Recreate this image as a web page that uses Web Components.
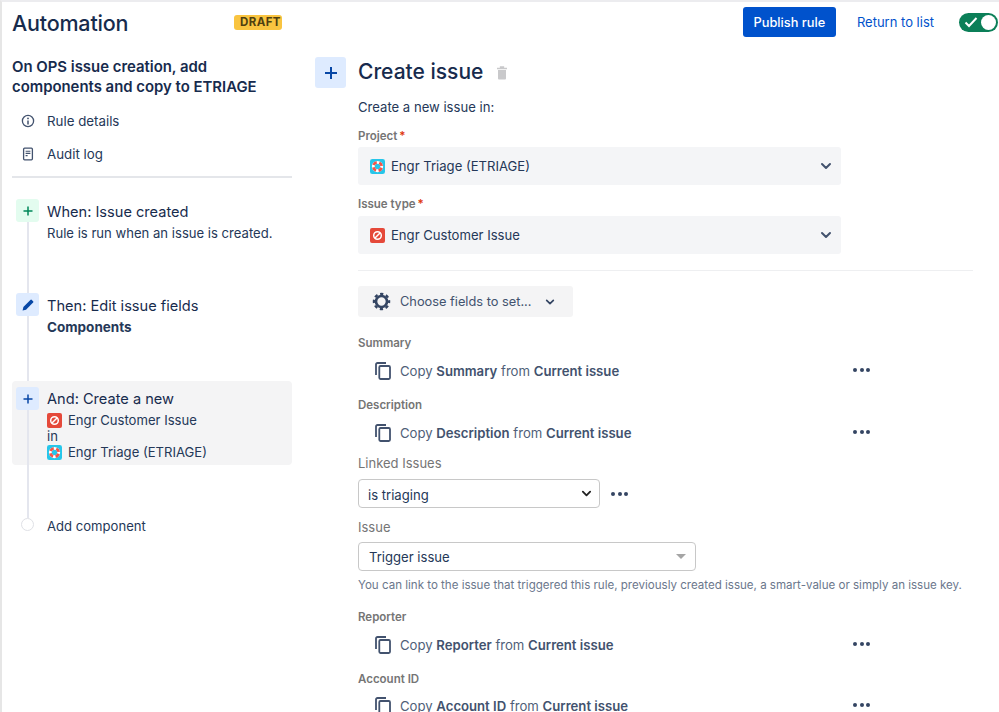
<!DOCTYPE html>
<html>
<head>
<meta charset="utf-8">
<title>Automation</title>
<style>
    html, body { margin: 0; height: 712px; overflow: hidden; background: #fff; }
    body { font-family: Inter, "Liberation Sans", sans-serif; color: #172b4d; }
</style>
</head>
<body>

<auto-page>
    <auto-topbar slot="top"></auto-topbar>

    <rule-sidebar slot="side">
        <span slot="title">On OPS issue creation, add components and copy to ETRIAGE</span>
        <side-link icon="info">Rule details</side-link>
        <side-link icon="log">Audit log</side-link>
        <rule-step slot="steps" tone="green" icon="plus" height="94" heading="When: Issue created">Rule is run when an issue is created.</rule-step>
        <rule-step slot="steps" tone="blue" icon="pencil" height="88" heading="Then: Edit issue fields"><b>Components</b></rule-step>
        <rule-step slot="steps" tone="blue" icon="plus" height="84" heading="And: Create a new" active>
            <type-line><issue-icon kind="bug"></issue-icon>Engr Customer Issue</type-line>
            <type-line>in</type-line>
            <type-line><issue-icon kind="ring"></issue-icon>Engr Triage (ETRIAGE)</type-line>
        </rule-step>
        <rule-add slot="steps">Add component</rule-add>
    </rule-sidebar>

    <issue-panel slot="main">
        <form-label style="margin-top:10px" plain big>Create a new issue in:</form-label>

        <form-label style="margin-top:10px" required>Project</form-label>
        <pick-field style="margin-top:4px"><issue-icon kind="ring"></issue-icon>Engr Triage (ETRIAGE)</pick-field>

        <form-label style="margin-top:10px" required>Issue type</form-label>
        <pick-field style="margin-top:5px"><issue-icon kind="bug"></issue-icon>Engr Customer Issue</pick-field>

        <hr-line style="margin-top:16px"></hr-line>

        <choose-button style="margin-top:15px">Choose fields to set...</choose-button>

        <form-label style="margin-top:17px">Summary</form-label>
        <copy-row style="margin-top:6px">Copy <b>Summary</b> from <b>Current issue</b></copy-row>

        <form-label style="margin-top:10px">Description</form-label>
        <copy-row style="margin-top:6px">Copy <b>Description</b> from <b>Current issue</b></copy-row>

        <form-label style="margin-top:7px" plain>Linked Issues</form-label>
        <link-select style="margin-top:8px" width="242" more>is triaging</link-select>

        <form-label style="margin-top:11px" plain>Issue</form-label>
        <link-select style="margin-top:7px" width="338" caret>Trigger issue</link-select>

        <hint-text style="margin-top:6px">You can link to the issue that triggered this rule, previously created issue, a smart-value or simply an issue key.</hint-text>

        <form-label style="margin-top:15px">Reporter</form-label>
        <copy-row style="margin-top:6px">Copy <b>Reporter</b> from <b>Current issue</b></copy-row>

        <form-label style="margin-top:10px">Account ID</form-label>
        <copy-row style="margin-top:5px">Copy <b>Account ID</b> from <b>Current issue</b></copy-row>
    </issue-panel>
</auto-page>

<script>
// shared icons
const ICONS = {
    plus: `<svg viewBox="0 0 12 12" width="12" height="12"><path d="M6 1.5v9M1.5 6h9" stroke="currentColor" stroke-width="1.5" fill="none"/></svg>`,
    pencil: `<svg viewBox="0 0 14 14" width="14" height="14"><path d="M9.4 1.9a1 1 0 0 1 1.4 0l1.3 1.3a1 1 0 0 1 0 1.4L5 11.7l-3.4.8.8-3.5z" fill="currentColor"/></svg>`,
    info: `<svg viewBox="0 0 14 14" width="14" height="14"><circle cx="7" cy="7" r="5.6" fill="none" stroke="currentColor" stroke-width="1.3"/><circle cx="7" cy="4.4" r=".9" fill="currentColor"/><path d="M7 6.4v4" stroke="currentColor" stroke-width="1.5"/></svg>`,
    log: `<svg viewBox="0 0 12 14" width="12" height="14"><rect x="1.6" y="1.2" width="8.8" height="11.6" rx="1" fill="none" stroke="currentColor" stroke-width="1.3"/><path d="M3.6 4.2h4.8M3.6 6.4h4.8M3.6 8.6h2" stroke="currentColor" stroke-width="1.1"/></svg>`,
    chevron: `<svg viewBox="0 0 12 12" width="12" height="12"><path d="M2 4l4 4 4-4" fill="none" stroke="currentColor" stroke-width="2" stroke-linecap="round" stroke-linejoin="round"/></svg>`,
    copy: `<svg viewBox="0 0 16 18" width="16" height="18"><path d="M1 13V2.500A1.500 1.500 0 0 1 2.500 1H11" fill="none" stroke="currentColor" stroke-width="1.800"/><rect x="4.300" y="4" width="10.700" height="13" rx="1.200" fill="none" stroke="currentColor" stroke-width="1.800"/></svg>`,
    gear: `<svg viewBox="0 0 20 20" width="19" height="19"><circle cx="10" cy="10" r="5.800" fill="none" stroke="currentColor" stroke-width="2.800"/><circle cx="10" cy="10" r="8" fill="none" stroke="currentColor" stroke-width="2.400" stroke-dasharray="3.400 2.880" stroke-dashoffset="1.700"/></svg>`,
    trash: `<svg viewBox="0 0 12 14" width="12" height="14"><path d="M1 2.500h10M4.500 2V1h3v1" stroke="currentColor" stroke-width="1.300" fill="none"/><path d="M2 4h8v8.500a1 1 0 0 1-1 1H3a1 1 0 0 1-1-1z" fill="currentColor"/></svg>`,
    check: `<svg viewBox="0 0 14 12" width="14" height="12"><path d="M1.500 6.500l3.500 3.500 7.500-8" fill="none" stroke="#fff" stroke-width="2"/></svg>`
};

// small helper, every element here is just a style + markup in an open root
function defineElement(tag, markup) {
    class El extends HTMLElement {
        constructor() {
            super();
            this.attachShadow({ mode: "open" });
            this.shadowRoot.innerHTML = typeof markup === "function" ? markup(this) : markup;
        }
    }
    customElements.define(tag, El);
}

defineElement("auto-page", `
    <style>
        :host { display: block; height: 712px; box-sizing: border-box; border-top: 2px solid #ececef; border-left: 2px solid #e6e6e6; overflow: hidden; }
        .body { display: flex; padding-left: 10px; }
        ::slotted([slot=side]) { flex: 0 0 280px; }
        ::slotted([slot=main]) { flex: 0 0 658px; margin-left: 23px; }
    </style>
    <slot name="top"></slot>
    <div class="body"><slot name="side"></slot><slot name="main"></slot></div>
`);

defineElement("auto-topbar", `
    <style>
        :host { display: flex; align-items: center; height: 40px; margin-bottom: 15px; padding: 0 1px 0 10px; }
        h1 { margin: 1px 0 0; width: 222px; font: 500 21.500px/30px Inter, sans-serif; letter-spacing: -.2px; color: #172b4d; }
        .badge { background: #f9c440; color: #4f3f10; font: 700 11.500px/15px Inter, sans-serif; letter-spacing: .4px; padding: 0 6px; margin-top: 1px; border-radius: 3px; width: 36px; text-align: center; }
        .right { margin-left: auto; display: flex; align-items: center; }
        button { width: 93px; height: 30px; border: 0; border-radius: 3px; background: #0052cc; color: #fff; font: 500 12.800px Inter, sans-serif; padding: 0; }
        a { color: #0052cc; font: 400 13px Inter, sans-serif; margin: 0 25px 0 21px; }
        .toggle { width: 39px; height: 19px; border-radius: 10px; background: #0b7f58; display: flex; align-items: center; justify-content: space-between; padding: 0 2px 0 5px; box-sizing: border-box; }
        .knob { width: 15px; height: 15px; border-radius: 50%; background: #fff; }
        svg { display: block; }
    </style>
    <h1>Automation</h1>
    <span class="badge">DRAFT</span>
    <div class="right">
        <button>Publish rule</button>
        <a>Return to list</a>
        <div class="toggle">${ICONS.check}<span class="knob"></span></div>
    </div>
`);

defineElement("rule-sidebar", `
    <style>
        :host { display: block; }
        h2 { margin: 0 0 7px; font: 600 14.900px/20px Inter, sans-serif; color: #172b4d; width: 262px; }
        hr { border: 0; height: 2px; background: #e4e6ea; margin: 6px 0 21px; }
    </style>
    <h2><slot name="title"></slot></h2>
    <slot></slot>
    <hr>
    <slot name="steps"></slot>
`);

defineElement("side-link", el => `
    <style>
        :host { display: flex; align-items: center; height: 33px; padding-left: 9px; font: 400 13.300px Inter, sans-serif; color: #253858; }
        .i { width: 14px; display: flex; justify-content: center; margin-right: 12px; color: #42526e; }
        svg { display: block; }
    </style>
    <span class="i">${ICONS[el.getAttribute("icon")]}</span><slot></slot>
`);

defineElement("rule-step", el => {
    const active = el.hasAttribute("active");
    const tone = el.getAttribute("tone") === "green"
        ? "background:#e3fcef;color:#00875a"
        : "background:#deebff;color:#0747a6";
    return `
    <style>
        :host { display: flex; height: ${el.getAttribute("height")}px; padding-left: 4px; box-sizing: border-box; border-radius: 4px; ${active ? "background:#f4f4f5;padding-top:6px;" : ""} }
        .rail { width: 23px; margin-right: 8px; display: flex; flex-direction: column; align-items: center; flex: none; ${active ? "margin-bottom:-6px;" : ""} }
        .tile { width: 23px; height: 23px; flex: none; border-radius: 3px; display: flex; align-items: center; justify-content: center; ${tone} }
        .line { flex: 1; width: 2px; background: #e4e6ee; }
        h4 { margin: ${active ? 0 : 1}px 0 0; font: 400 14.600px/24px Inter, sans-serif; color: #172b4d; }
        .sub { font: 400 13.100px/17px Inter, sans-serif; color: #253858; margin-top: ${active ? 1 : 1}px; }
        ::slotted(b) { font-size: 13.500px; font-weight: 700; }
        svg { display: block; }
    </style>
    <div class="rail"><span class="tile">${ICONS[el.getAttribute("icon")]}</span><span class="line"></span></div>
    <div><h4>${el.getAttribute("heading")}</h4><div class="sub"><slot></slot></div></div>`;
});

defineElement("type-line", `
    <style>
        :host { display: flex; align-items: center; height: 16.300px; gap: 6px; }
    </style>
    <slot></slot>
`);

defineElement("rule-add", `
    <style>
        :host { display: flex; font: 400 13.100px/20px Inter, sans-serif; color: #253858; padding-left: 4px; }
        .rail { width: 23px; margin-right: 8px; display: flex; flex-direction: column; align-items: center; }
        .line { width: 2px; height: 53px; background: #e4e6ee; }
        .dot { width: 11px; height: 11px; border-radius: 50%; border: 1px solid #dfe1e6; background: #fff; }
        .t { margin-top: 51px; }
    </style>
    <div class="rail"><span class="line"></span><span class="dot"></span></div>
    <span class="t"><slot></slot></span>
`);

defineElement("issue-icon", el => el.getAttribute("kind") === "bug" ? `
    <style>:host { display: inline-flex; flex: none; } svg { display: block; }</style>
    <svg viewBox="0 0 15 15" width="15" height="15"><rect width="15" height="15" rx="2" fill="#e5493a"/><circle cx="7.500" cy="7.500" r="3.800" fill="none" stroke="#fff" stroke-width="1.500"/><path d="M5 10l5-5" stroke="#fff" stroke-width="1.500"/></svg>
` : `
    <style>:host { display: inline-flex; flex: none; } svg { display: block; }</style>
    <svg viewBox="0 0 16 16" width="15" height="15"><rect width="16" height="16" rx="2.500" fill="#26c6ea"/><circle cx="8" cy="8" r="4.500" fill="none" stroke="#fff" stroke-width="3"/><circle cx="8" cy="8" r="4.500" fill="none" stroke="#f2554a" stroke-width="3" stroke-dasharray="4.270 2.800" stroke-dashoffset="-1.400"/></svg>
`);

defineElement("issue-panel", `
    <style>
        :host { display: grid; grid-template-columns: 31px 615px; column-gap: 12px; align-content: start; }
        .tile { width: 31px; height: 31px; border-radius: 3px; background: #deebff; color: #0747a6; display: flex; align-items: center; justify-content: center; }
        .tile svg { width: 16px; height: 16px; display: block; }
        .head { display: flex; align-items: center; gap: 13px; }
        h1 { margin: 0; font: 500 21px/30px Inter, sans-serif; color: #172b4d; }
        .trash { color: #c9c9cb; display: flex; margin-top: 2px; }
        .trash svg { display: block; }
        .col { display: flex; flex-direction: column; }
    </style>
    <div class="tile">${ICONS.plus}</div>
    <div class="col">
        <div class="head"><h1>Create issue</h1><span class="trash">${ICONS.trash}</span></div>
        <slot></slot>
    </div>
`);

defineElement("form-label", el => {
    const plain = el.hasAttribute("plain");
    const big = el.hasAttribute("big");
    return `
    <style>
        :host { display: block; height: ${big ? 20 : 16}px; font: ${plain ? 400 : 600} ${big ? "13.100px/20px" : plain ? "13px/16px" : "11.500px/18px"} Inter, sans-serif; color: ${big ? "#253858" : "#757575"}; }
        i { color: #de350b; font-style: normal; margin-left: 2px; }
    </style>
    <slot></slot>${el.hasAttribute("required") ? "<i>*</i>" : ""}`;
});

defineElement("pick-field", `
    <style>
        :host { display: flex; align-items: center; width: 483px; height: 38px; box-sizing: border-box; padding: 0 9px 0 12px; gap: 6px; border-radius: 3px; background: #f4f5f7; font: 400 13.100px Inter, sans-serif; color: #253858; }
        .c { margin-left: auto; color: #42526e; display: flex; }
        svg { display: block; }
    </style>
    <slot></slot><span class="c">${ICONS.chevron}</span>
`);

defineElement("hr-line", `<style>:host { display: block; height: 1px; background: #eeeff1; }</style>`);

defineElement("choose-button", `
    <style>
        :host { display: flex; align-items: center; width: 215px; height: 31px; box-sizing: border-box; padding-left: 14px; border-radius: 3px; background: #f4f4f5; font: 400 12.800px Inter, sans-serif; color: #42526e; }
        .g { display: flex; margin-right: 9px; color: #344563; }
        .c { display: flex; margin-left: 14px; color: #344563; }
        .c svg { width: 10px; height: 10px; }
        svg { display: block; }
    </style>
    <span class="g">${ICONS.gear}</span><slot></slot><span class="c">${ICONS.chevron}</span>
`);

defineElement("copy-row", `
    <style>
        :host { display: flex; align-items: center; width: 512px; height: 30px; box-sizing: border-box; padding-left: 17px; font: 400 13.150px Inter, sans-serif; color: #505f79; white-space: pre; }
        .i { display: flex; margin-right: 9px; color: #42526e; }
        .dots { margin-left: auto; margin-bottom: 2px; display: flex; gap: 2.500px; }
        .dots span { width: 4px; height: 4px; border-radius: 50%; background: #344563; }
        ::slotted(b) { font-weight: 600; color: #42526e; }
        svg { display: block; }
    </style>
    <span class="i">${ICONS.copy}</span><span><slot></slot></span>
    <span class="dots"><span></span><span></span><span></span></span>
`);

defineElement("link-select", el => `
    <style>
        :host { display: flex; align-items: center; font: 400 13.100px Inter, sans-serif; color: #253858; }
        .box { width: ${el.getAttribute("width")}px; height: 29px; box-sizing: border-box; border: 1px solid #c8c8c8; border-radius: 4px; background: #fff; display: flex; align-items: center; padding: 0 7px 0 ${el.hasAttribute("caret") ? 10 : 9}px; }
        .t { padding-top: ${el.hasAttribute("more") ? 2 : 0}px; }
        .c { margin-left: auto; display: flex; color: #222; }
        .c svg { width: 11px; height: 11px; display: block; }
        .caret { margin-left: auto; margin-right: 2px; width: 0; height: 0; border: 5px solid transparent; border-top: 5px solid #a5a5a5; border-bottom: 0; }
        .dots { margin-left: 11px; display: flex; gap: 2.500px; }
        .dots span { width: 4px; height: 4px; border-radius: 50%; background: #344563; }
    </style>
    <div class="box"><span class="t"><slot></slot></span>${el.hasAttribute("caret") ? '<span class="caret"></span>' : `<span class="c">${ICONS.chevron}</span>`}</div>
    ${el.hasAttribute("more") ? '<span class="dots"><span></span><span></span><span></span></span>' : ""}
`);

defineElement("hint-text", `
    <style>:host { display: block; font: 400 11.560px/16px Inter, sans-serif; color: #6b778c; white-space: nowrap; }</style>
    <slot></slot>
`);
</script>
</body>
</html>
